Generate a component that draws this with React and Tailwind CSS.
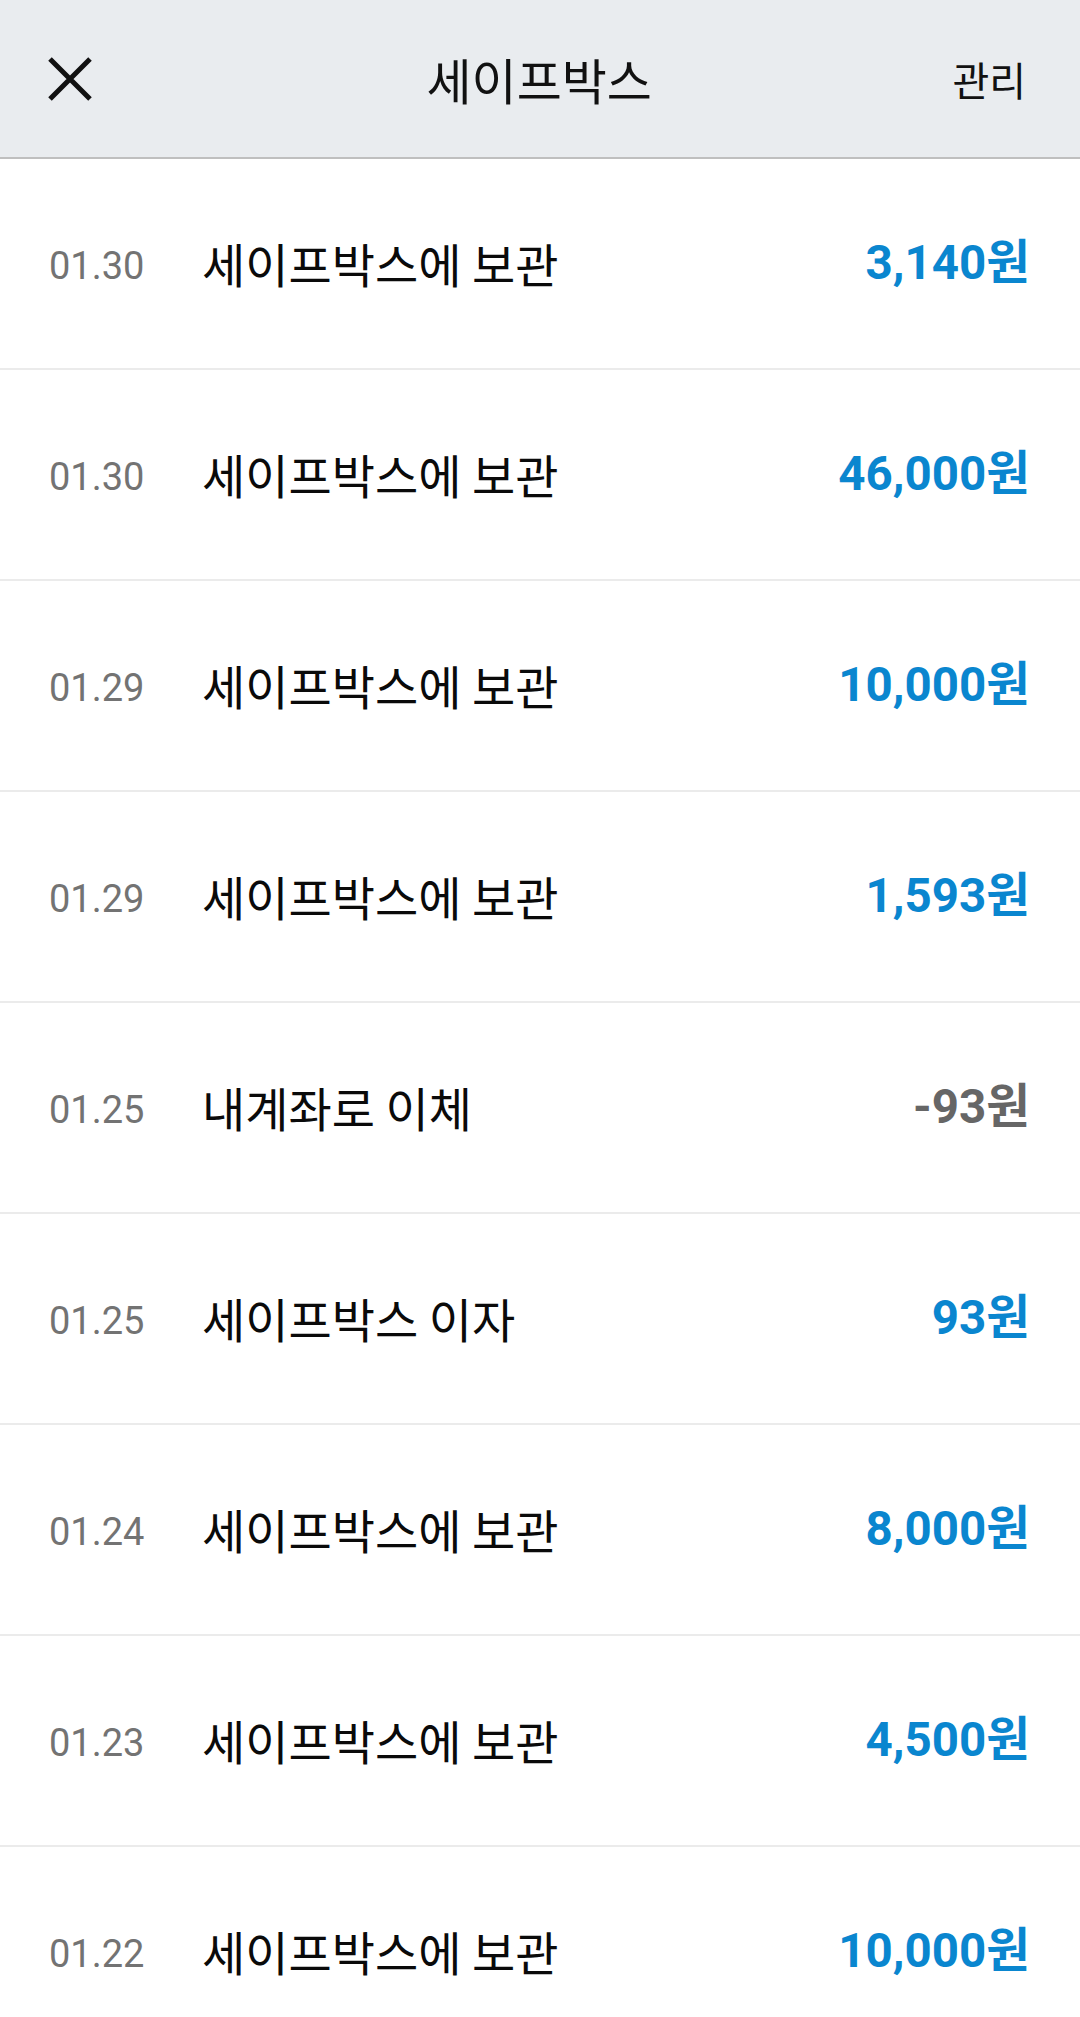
import React from "react";

const rows = [
  { d: "01.30", t: "세이프박스에 보관", a: "3,140원", neg: false },
  { d: "01.30", t: "세이프박스에 보관", a: "46,000원", neg: false },
  { d: "01.29", t: "세이프박스에 보관", a: "10,000원", neg: false },
  { d: "01.29", t: "세이프박스에 보관", a: "1,593원", neg: false },
  { d: "01.25", t: "내계좌로 이체", a: "-93원", neg: true },
  { d: "01.25", t: "세이프박스 이자", a: "93원", neg: false },
  { d: "01.24", t: "세이프박스에 보관", a: "8,000원", neg: false },
  { d: "01.23", t: "세이프박스에 보관", a: "4,500원", neg: false },
  { d: "01.22", t: "세이프박스에 보관", a: "10,000원", neg: false },
];

export default function App() {
  return (
    <div className="w-[1080px] h-[2017px] overflow-hidden bg-white" style={{ fontFamily: 'Roboto, "Noto Sans CJK KR", sans-serif' }}>
      <header className="h-[159px] bg-[#e9ecef] border-b-2 border-[#bfbfbf] flex items-center px-[48px] relative">
        <svg width="44" height="44" viewBox="0 0 44 44" className="shrink-0">
          <path d="M2 2 L42 42 M42 2 L2 42" stroke="#111" strokeWidth="5" strokeLinecap="butt" fill="none" />
        </svg>
        <div className="flex-1 text-center text-[49px] text-[#111] leading-none pl-[34px]" style={{ fontFamily: '"Noto Sans CJK KR", sans-serif' }}>
          세이프박스
        </div>
        <div className="text-[40px] text-[#111] leading-none pr-[6px]" style={{ fontFamily: '"Noto Sans CJK KR", sans-serif' }}>
          관리
        </div>
      </header>
      <ul>
        {rows.map((r, i) => (
          <li key={i} className="h-[211px] border-b-2 border-[#ebebeb] flex items-center pl-[49px] pr-[50px]">
            <span className="w-[153px] shrink-0 text-[38px] text-[#737373] pt-[6px]">{r.d}</span>
            <span className="flex-1 text-[47px] text-[#0a0a0a]" style={{ fontFamily: '"Noto Sans CJK KR", sans-serif' }}>{r.t}</span>
            <span className={`text-[47.5px] font-bold ${r.neg ? "text-[#666666]" : "text-[#0a86cf]"}`}>{r.a}</span>
          </li>
        ))}
      </ul>
    </div>
  );
}
